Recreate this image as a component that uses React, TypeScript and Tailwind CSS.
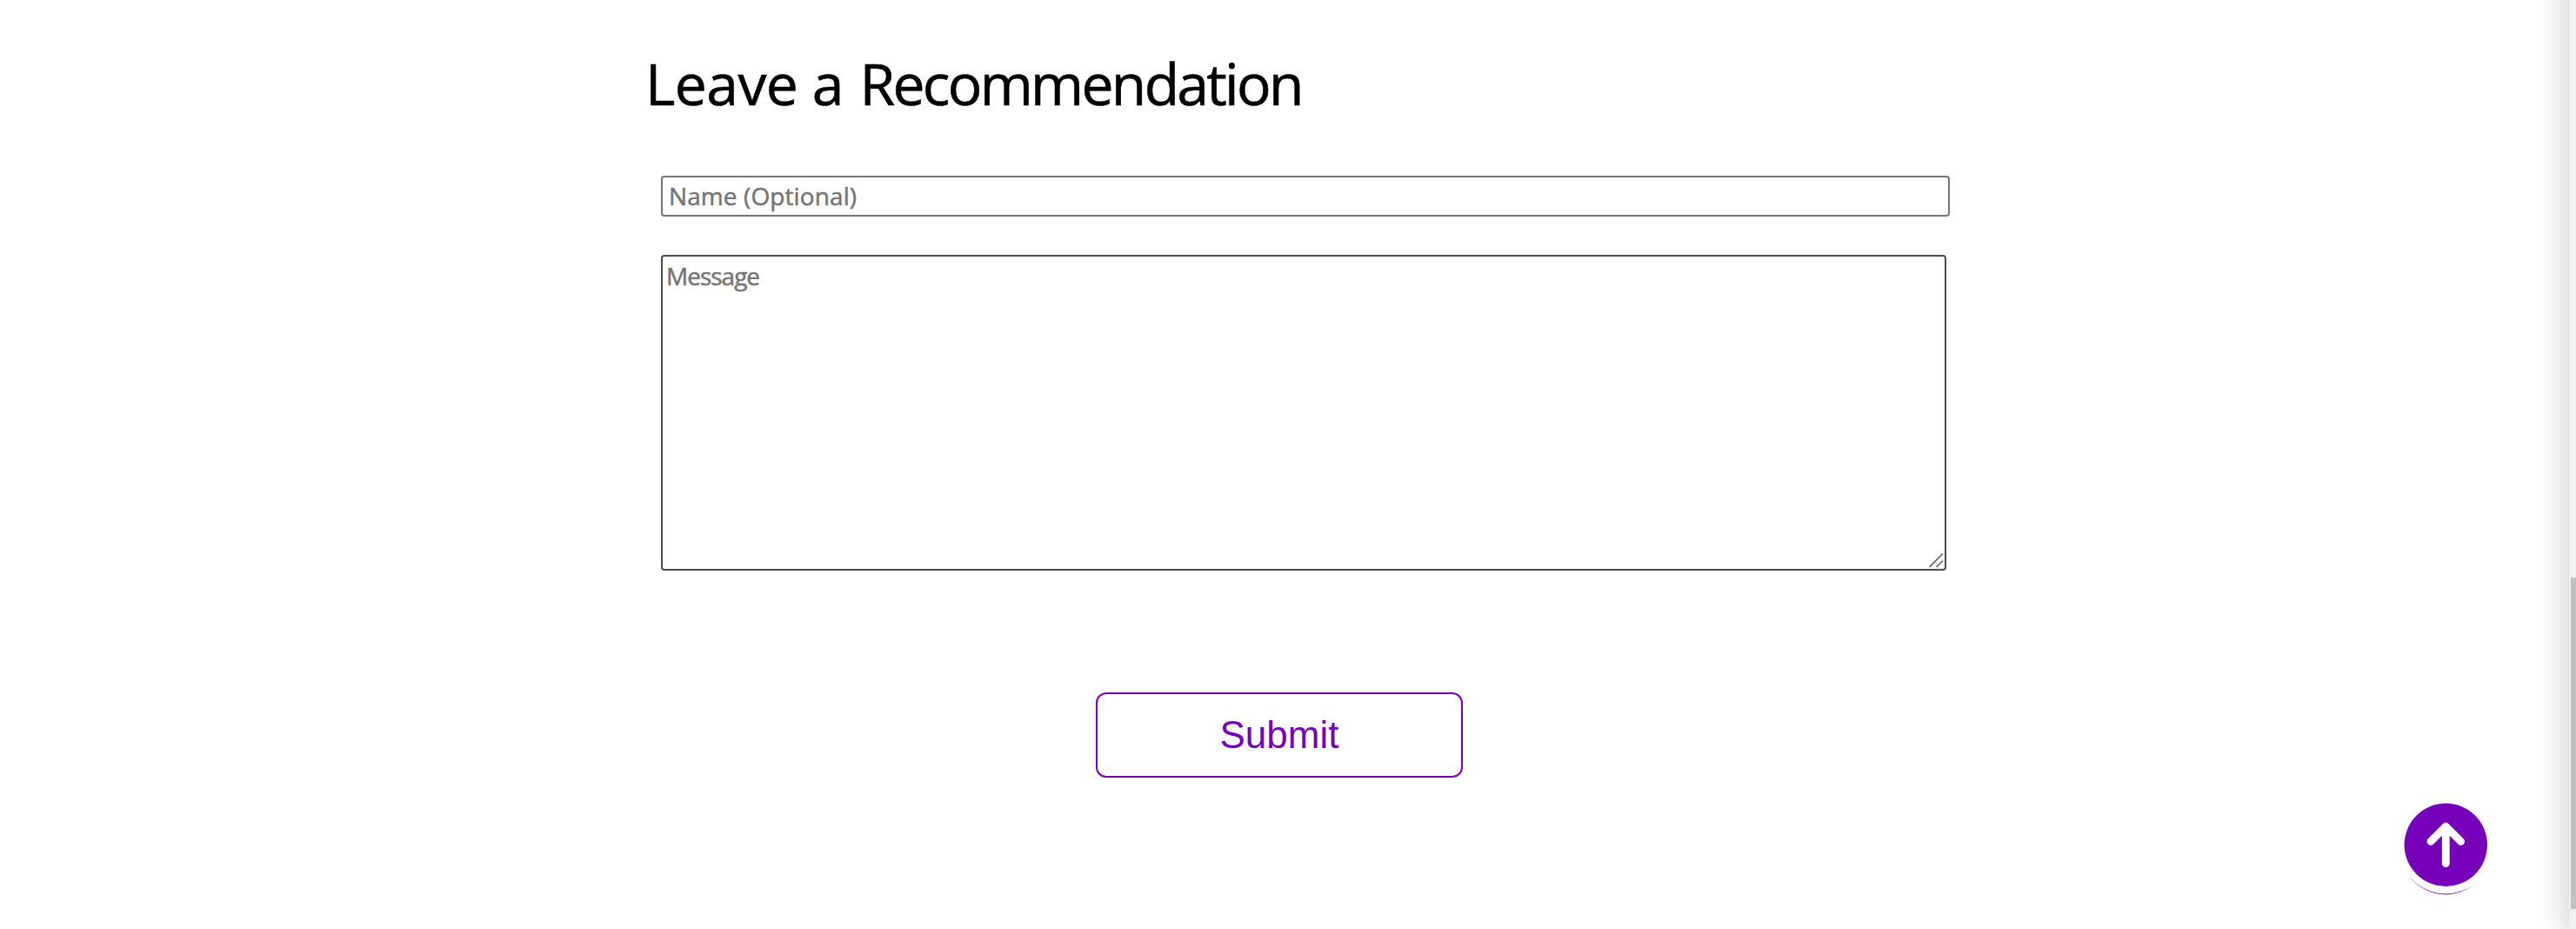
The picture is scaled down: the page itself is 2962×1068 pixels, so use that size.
export default function App() {
  return (
    <div className="relative flex h-[1068px] w-[2962px] overflow-hidden bg-white font-['Trebuchet_MS','Open_Sans',sans-serif]">
      <main className="flex-1 pl-[742px] pt-[49px]">
        <h1 className="h-[92px] whitespace-nowrap text-[66px] leading-[92px] tracking-[-0.6px] text-black [-webkit-text-stroke:0.6px_#000]">
          Leave a <span className="ml-[2px] tracking-[-2.7px]">Recommendation</span>
        </h1>
        <form className="ml-[18px] mt-[61px]">
          <input
            placeholder="Name (Optional)"
            className="block h-[47px] w-[1482px] rounded-[4px] border-2 border-[#757575] px-[7px] pb-[2px] text-[28px] tracking-[0.1px] [-webkit-text-stroke:0.5px_#757575] placeholder:text-[#757575] focus:outline-none"
          />
          <div className="relative mt-[44px] h-[363px] w-[1478px]">
            <textarea
              placeholder="Message"
              className="block h-full w-full resize-none rounded-[4px] border-2 border-[#4c4c4c] px-[4px] py-[4px] text-[28px] leading-[36px] tracking-[-1px] [-webkit-text-stroke:0.5px_#757575] placeholder:text-[#757575] focus:outline-none"
            />
            <svg className="absolute bottom-[3px] right-[3px]" width="17" height="17" fill="none" stroke="#666" strokeWidth="1.7">
              <path d="M0.5 16L16 0.500M8.500 16L16 8.500" />
            </svg>
          </div>
          <button
            type="button"
            className="ml-[500px] mt-[140px] block h-[98px] w-[422px] rounded-[12px] border-2 border-[#7700bb] font-['Liberation_Sans',sans-serif] text-[44px] leading-none text-[#7700bb]"
          >
            Submit
          </button>
        </form>
      </main>
      <button type="button" aria-label="Back to top" className="absolute left-[2764px] top-[923px]">
        <svg width="97" height="106" viewBox="0 0 97 106">
          <path d="M5 84C29 111 59 111 84 92C59 109.800 29 109.800 5 84Z" fill="#7700bb" />
          <circle cx="48.300" cy="48.300" r="47.700" fill="#7700bb" />
          <path d="M48.300 69.700V27M31 44.300L48.300 27L65.600 44.300" fill="none" stroke="#fff" strokeWidth="8.800" strokeLinecap="round" strokeLinejoin="round" />
        </svg>
      </button>
      <div className="h-full w-[8px] shrink-0">
        <div className="-mt-[50px] h-[1128px] w-[100px] bg-[#f0f0f0] pl-[2px] pt-[714px] shadow-[0_0_40px_rgba(0,0,0,0.23)]">
          <div className="h-[381px] bg-[#c1c1c1]" />
        </div>
      </div>
    </div>
  );
}
